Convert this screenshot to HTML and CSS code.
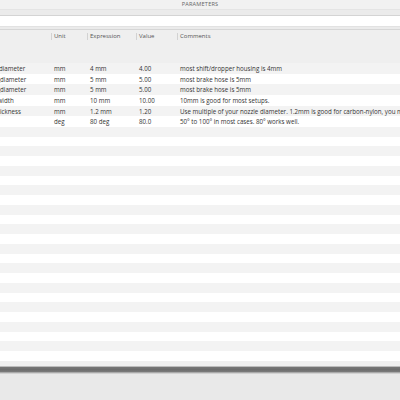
FILE: index.html
```html
<!DOCTYPE html>
<html>
<head>
<meta charset="utf-8">
<title>Parameters</title>
<link rel="stylesheet" href="styles.css">
</head>
<body>
<div class="panel">
  <div class="titlebar">PARAMETERS</div>
  <div class="searchbar"><div class="search-field"></div></div>
  <div class="table">
    <div class="table-inner">
      <div class="head">
        <div class="hcell"></div>
        <div class="hcell sep">Unit</div>
        <div class="hcell sep">Expression</div>
        <div class="hcell sep">Value</div>
        <div class="hcell sep">Comments</div>
      </div>
      <div class="rows">
        <div class="row data odd"><span class="cell">shift_housing_diameter</span><span class="cell">mm</span><span class="cell">4 mm</span><span class="cell">4.00</span><span class="cell">most shift/dropper housing is 4mm</span></div>
        <div class="row data"><span class="cell">brake_hose_1_diameter</span><span class="cell">mm</span><span class="cell">5 mm</span><span class="cell">5.00</span><span class="cell">most brake hose is 5mm</span></div>
        <div class="row data odd"><span class="cell">brake_hose_2_diameter</span><span class="cell">mm</span><span class="cell">5 mm</span><span class="cell">5.00</span><span class="cell">most brake hose is 5mm</span></div>
        <div class="row data"><span class="cell">mount_strap_width</span><span class="cell">mm</span><span class="cell">10 mm</span><span class="cell">10.00</span><span class="cell">10mm is good for most setups.</span></div>
        <div class="row data odd"><span class="cell">mount_wall_thickness</span><span class="cell">mm</span><span class="cell">1.2 mm</span><span class="cell">1.20</span><span class="cell">Use multiple of your nozzle diameter. 1.2mm is good for carbon-nylon, you may want to go thinner for PETG.</span></div>
        <div class="row data"><span class="cell">bend_angle</span><span class="cell">deg</span><span class="cell">80 deg</span><span class="cell">80.0</span><span class="cell">50° to 100° in most cases. 80° works well.</span></div>
        <div class="row odd"></div><div class="row"></div>
        <div class="row odd"></div><div class="row"></div>
        <div class="row odd"></div><div class="row"></div>
        <div class="row odd"></div><div class="row"></div>
        <div class="row odd"></div><div class="row"></div>
        <div class="row odd"></div><div class="row"></div>
        <div class="row odd"></div><div class="row"></div>
        <div class="row odd"></div><div class="row"></div>
        <div class="row odd"></div><div class="row"></div>
        <div class="row odd"></div><div class="row"></div>
        <div class="row odd"></div><div class="row"></div>
        <div class="row odd"></div><div class="row"></div>
      </div>
    </div>
  </div>
  <div class="footer">
    <div class="footer-shade"></div>
    <div class="splitter"></div>
    <div class="footer-body"></div>
  </div>
</div>
</body>
</html>
```
FILE: styles.css
```css
html, body {
  margin: 0;
  padding: 0;
  width: 400px;
  height: 400px;
  overflow: hidden;
  background: #e9e9e9;
}

.panel {
  display: flex;
  flex-direction: column;
  width: 400px;
  height: 400px;
  font-family: "Open Sans", "Liberation Sans", sans-serif;
  color: #333;
}

.titlebar {
  height: 9px;
  line-height: 9px;
  font-size: 5.6px;
  text-align: center;
  color: #666;
  background: #f1f1f1;
  border-bottom: 1px solid #e4e4e4;
  letter-spacing: 0.2px;
}

.searchbar {
  height: 20px;
  box-sizing: border-box;
  padding: 5px 0 2px;
  background: #ebebeb;
  border-bottom: 1px solid #d6d6d6;
  display: flex;
  flex-direction: column;
}

.search-field {
  flex: 1;
  background: #fff;
  border-top: 1px solid #d4d4d4;
  border-bottom: 1px solid #e2e2e2;
}

.table {
  flex: none;
  height: 331px;
  overflow: hidden;
  background: #fff;
}

.table-inner {
  margin-left: -45px;
}

.head,
.row {
  display: grid;
  grid-template-columns: 96px 36px 49px 41px 1fr;
}

.head {
  height: 33px;
  background: #efefef;
  font-size: 6px;
  color: #555;
}

.hcell {
  padding: 3px 0 0 2px;
  height: 7px;
  line-height: 7px;
  white-space: nowrap;
}

.hcell.sep {
  border-left: 1px solid #d2d2d2;
  margin-top: 3px;
  padding-top: 0;
}

.rows {
  display: flex;
  flex-direction: column;
}

.row {
  height: 9.75px;
  background: #fff;
}

.row.odd {
  background: #f3f3f3;
}

.row.data {
  height: 10.67px;
  font-size: 6.2px;
  line-height: 11px;
}

.cell {
  padding-left: 3px;
  white-space: nowrap;
  overflow: hidden;
}

.footer {
  flex: 1;
  display: flex;
  flex-direction: column;
}

.footer-shade {
  height: 5px;
  background: #efefef;
  border-bottom: 1px solid #bcbcbc;
}

.splitter {
  height: 5px;
  background: linear-gradient(#767676, #6c6c6c 50%, #7c7c7c);
  border-bottom: 1px solid #aaa;
}

.footer-body {
  flex: 1;
  background: #e9e9e9;
  border-top: 1px solid #d2d2d2;
}
```
